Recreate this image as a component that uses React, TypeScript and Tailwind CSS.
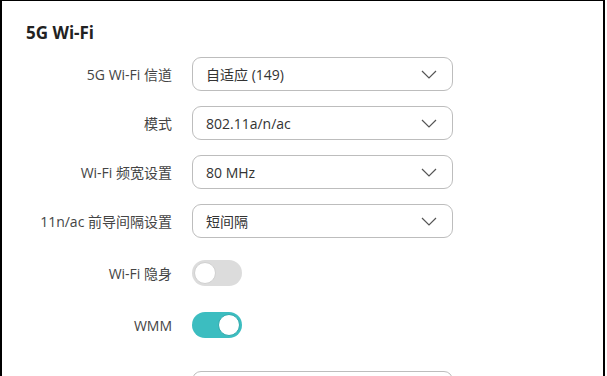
import React from 'react';

const font = { fontFamily: '"Open Sans", "Noto Sans CJK SC", sans-serif' };

function Chevron() {
  return (
    <svg width="16" height="9" viewBox="0 0 16 9" fill="none">
      <polyline points="1,1 8,8 15,1" stroke="#555" strokeWidth="1.2" />
    </svg>
  );
}

function Select({ value }: { value: string }) {
  return (
    <div className="flex h-[34px] w-[261px] items-center justify-between rounded-[9px] border border-[#bdbdbd] bg-white pl-[13px] pr-[15px] text-[14px] text-[#333]">
      <span>{value}</span>
      <Chevron />
    </div>
  );
}

function Toggle({ on }: { on: boolean }) {
  return (
    <div
      className={
        on
          ? 'flex h-[26px] w-[50px] items-center justify-end rounded-full bg-[#3cbdc0] px-[2px]'
          : 'flex h-[26px] w-[50px] items-center justify-start rounded-full bg-[#dcdcdc] px-[2px]'
      }
    >
      <div
        className={
          on
            ? 'h-[22px] w-[22px] rounded-full border border-[#2fa9ac] bg-white'
            : 'h-[22px] w-[22px] rounded-full border border-[#d0d0d0] bg-white'
        }
      />
    </div>
  );
}

function Row({ label, children, className }: { label: string; children: React.ReactNode; className?: string }) {
  return (
    <div className={'flex h-[34px] items-center ' + (className ?? '')}>
      <div className="w-[170px] text-right text-[14px] text-[#444]">{label}</div>
      <div className="ml-[20px]">{children}</div>
    </div>
  );
}

export default function App() {
  return (
    <div style={font} className="h-[376px] w-[607px] overflow-hidden bg-white">
      <div className="h-[376px] w-[605px] border-l-2 border-r-2 border-t border-black pt-[20px]">
        <h2 className="pl-[24px] text-[17px] font-bold leading-[24px] text-[#222]">5G Wi-Fi</h2>
        <div className="mt-[12px] flex flex-col">
          <Row label="5G Wi-Fi 信道">
            <Select value="自适应 (149)" />
          </Row>
          <Row label="模式" className="mt-[15px]">
            <Select value="802.11a/n/ac" />
          </Row>
          <Row label="Wi-Fi 频宽设置" className="mt-[15px]">
            <Select value="80 MHz" />
          </Row>
          <Row label="11n/ac 前导间隔设置" className="mt-[15px]">
            <Select value="短间隔" />
          </Row>
          <Row label="Wi-Fi 隐身" className="mt-[18px]">
            <Toggle on={false} />
          </Row>
          <Row label="WMM" className="mt-[18px]">
            <Toggle on={true} />
          </Row>
          <Row label="" className="mt-[29px]">
            <Select value="" />
          </Row>
        </div>
      </div>
    </div>
  );
}
